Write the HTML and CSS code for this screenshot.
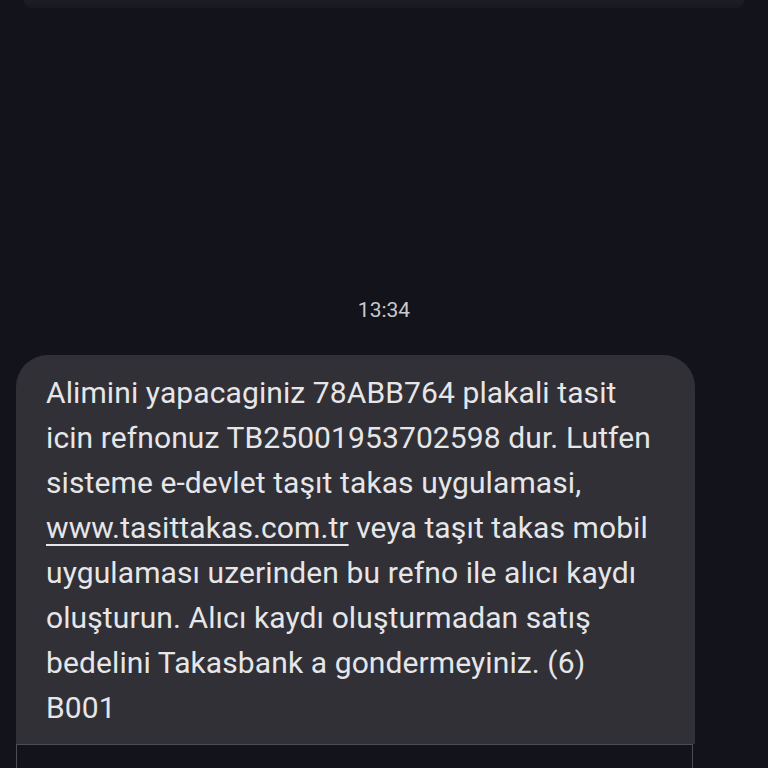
FILE: index.html
```html
<!DOCTYPE html>
<html lang="tr">
  <head>
    <meta charset="UTF-8" />
    <meta name="viewport" content="width=device-width, initial-scale=1.0" />
    <title>Mesajlar</title>
    <link rel="stylesheet" href="styles.css">
  </head>
  <body>
    <div class="top-bubble"></div>
    <div class="timestamp">13:34</div>
    <div class="bubble">
      <p class="bubble-text">Alimini yapacaginiz 78ABB764 plakali tasit<br>icin refnonuz TB25001953702598 dur. Lutfen<br>sisteme e-devlet taşıt takas uygulamasi,<br><a href="#" class="link">www.tasittakas.com.tr</a> veya taşıt takas mobil<br>uygulaması uzerinden bu refno ile alıcı kaydı<br>oluşturun. Alıcı kaydı oluşturmadan satış<br>bedelini Takasbank a gondermeyiniz. (6)<br>B001</p>
    </div>
    <div class="next-card"></div>
  </body>
</html>
```

FILE: styles.css
```css
html,
body {
  height: 100%;
}
body {
  margin: 0;
  background-color: #13131b;
  font-family: Roboto, "Noto Sans", sans-serif;
  color: #e6e6e9;
  overflow: hidden;
}
.top-bubble {
  height: 8px;
  margin: 0 24px;
  background: linear-gradient(#1d1d26, #191921);
  border-radius: 0 0 10px 10px;
}
.timestamp {
  margin-top: 289px;
  text-align: center;
  font-size: 21px;
  line-height: 26px;
  color: #c9c9ce;
}
.bubble {
  margin: 32px 73px 0 16px;
  background-color: #303036;
  border-radius: 32px 32px 0 0;
  padding: 15px 20px 14px 30px;
}
.bubble-text {
  margin: 0;
  font-size: 30px;
  line-height: 45px;
  letter-spacing: 0.1px;
}
.link {
  color: inherit;
  text-decoration: underline;
  text-underline-offset: 6px;
  text-decoration-thickness: 2px;
}
.next-card {
  margin: 0 75px 0 16px;
  height: 40px;
  border: 1px solid #4c4c53;
  border-bottom: none;
  background-color: #13131b;
}
```
